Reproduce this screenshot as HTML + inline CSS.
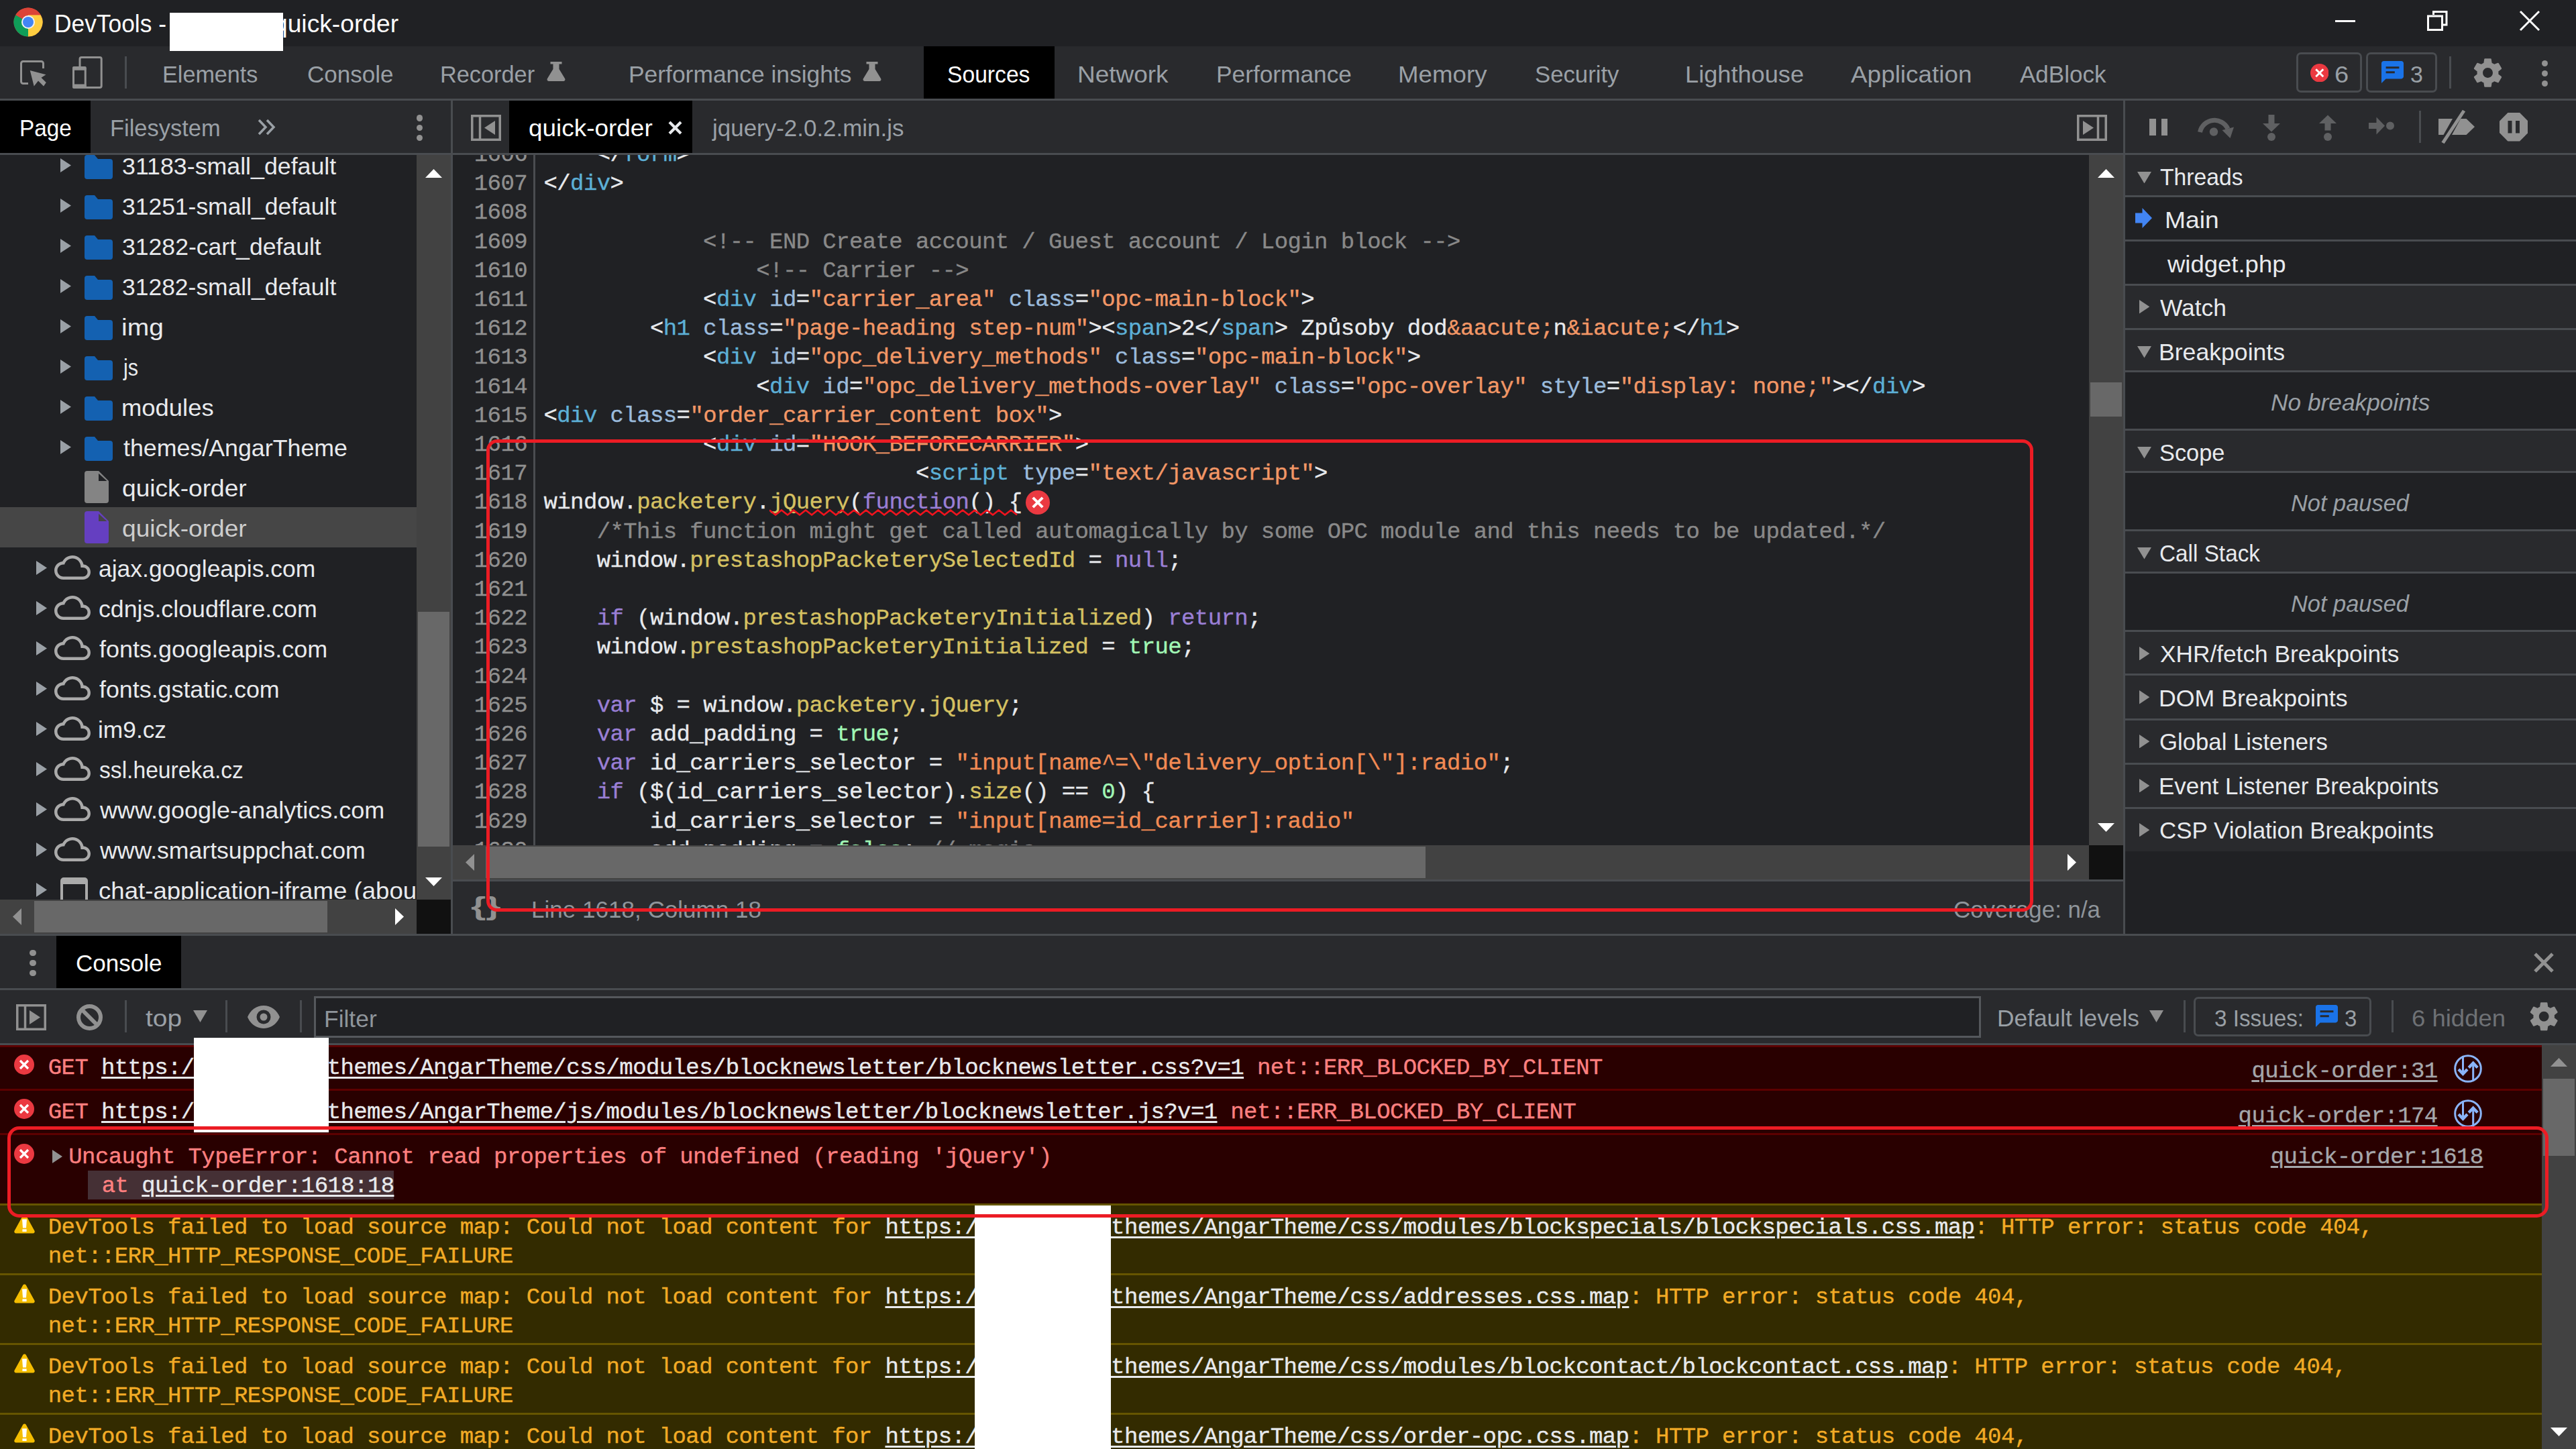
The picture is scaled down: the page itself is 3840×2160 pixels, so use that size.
<!DOCTYPE html>
<html><head><meta charset="utf-8"><title>DevTools - quick-order</title>
<style>
*{margin:0;padding:0;box-sizing:border-box}
html,body{width:3840px;height:2160px;overflow:hidden;background:#202124}
body{position:relative;font-family:"Liberation Sans",sans-serif}
#r{position:absolute;left:0;top:0;width:3840px;height:2160px;overflow:hidden}
#r div,#r svg{position:absolute}
.s{font-family:"Liberation Sans",sans-serif;white-space:pre;transform-origin:0 0}
.m{font-family:"Liberation Mono",monospace;white-space:pre;font-size:34px;line-height:43px;letter-spacing:-0.6px;color:#e8eaed;-webkit-text-stroke:0.35px}
.m span,.m u{position:static}
.clip{overflow:hidden}
u{text-decoration:underline;text-decoration-thickness:2.6px;text-underline-offset:3.5px}
</style></head>
<body><div id="r">
<div style="left:0px;top:0px;width:3840px;height:69px;background:#202124;"></div>
<div style="left:0px;top:69px;width:3840px;height:78px;background:#292a2d;"></div>
<div style="left:0px;top:147px;width:3840px;height:3px;background:#494c50;"></div>
<div style="left:0px;top:150px;width:3840px;height:78px;background:#292a2d;"></div>
<div style="left:0px;top:228px;width:3840px;height:3px;background:#494c50;"></div>
<svg style="left:20px;top:11px;" width="44" height="44" viewBox="0 0 44 44"><circle cx="22" cy="22" r="21.5" fill="#db4437"/>
<path d="M22 22 L3.4 11.2 A21.5 21.5 0 0 0 22 43.5 L31.3 27.4 Z" fill="#0f9d58"/>
<path d="M22 22 L22 43.5 A21.5 21.5 0 0 0 40.6 11.2 L22 11.2 Z" fill="#ffcd40"/>
<path d="M22 22 L3.4 11.2 A21.5 21.5 0 0 1 40.6 11.2 L22 11.2 Z" fill="#db4437"/>
<circle cx="22" cy="22" r="10" fill="#f1f1f1"/><circle cx="22" cy="22" r="8" fill="#4285f4"/></svg>
<div id="t0" class="s" style="left:80.54px;top:17.8px;font-size:36px;line-height:36px;color:#fff;transform:scaleX(0.9817);">DevTools -</div>
<div id="t1" class="s" style="left:408.47px;top:17.8px;font-size:36px;line-height:36px;color:#fff;transform:scaleX(1.0330);">quick-order</div>
<div style="left:253px;top:19px;width:169px;height:57px;background:#fff;"></div>
<div style="left:3481px;top:30px;width:30px;height:3px;background:#fff;"></div>
<svg style="left:3616px;top:14px;" width="34" height="34" viewBox="0 0 34 34"><path d="M11.5 8 V3.5 H31 V23 H26" fill="none" stroke="#fff" stroke-width="3"/><rect x="3.5" y="10" width="21" height="20.5" fill="none" stroke="#fff" stroke-width="3"/></svg>
<svg style="left:3754px;top:14px;" width="34" height="34" viewBox="0 0 34 34"><path d="M3 3 L31 31 M31 3 L3 31" stroke="#fff" stroke-width="3" fill="none"/></svg>
<svg style="left:28px;top:88px;" width="44" height="44" viewBox="0 0 44 44"><path d="M36.5 14 V6.5 a3 3 0 0 0 -3 -3 H6.5 a3 3 0 0 0 -3 3 V33.5 a3 3 0 0 0 3 3 H14" fill="none" stroke="#919191" stroke-width="3"/><path d="M16.75 17 L40.5 23.3 L33.5 27.8 L40.8 35 L37 40.5 L29 32.5 L22.7 40.5 Z" fill="#919191"/></svg>
<svg style="left:106px;top:82px;" width="50" height="52" viewBox="0 0 50 52"><rect x="13" y="3.5" width="32.2" height="45" rx="2.5" fill="none" stroke="#919191" stroke-width="3"/><rect x="3.5" y="18.5" width="17.75" height="30" rx="2.5" fill="#292a2d" stroke="#919191" stroke-width="3"/><rect x="2" y="17" width="20.75" height="5.75" rx="2" fill="#919191"/><rect x="2" y="43.6" width="20.75" height="6.4" rx="2" fill="#919191"/></svg>
<div style="left:186px;top:84px;width:3px;height:48px;background:#494c50;"></div>
<div id="t2" class="s" style="left:242.05px;top:92.9px;font-size:35px;line-height:35px;color:#9aa0a6;transform:scaleX(0.9763);">Elements</div>
<div id="t3" class="s" style="left:458.0px;top:92.9px;font-size:35px;line-height:35px;color:#9aa0a6;transform:scaleX(1.0004);">Console</div>
<div id="t4" class="s" style="left:656.04px;top:92.9px;font-size:35px;line-height:35px;color:#9aa0a6;transform:scaleX(0.9804);">Recorder</div>
<div id="t5" class="s" style="left:936.98px;top:92.9px;font-size:35px;line-height:35px;color:#9aa0a6;transform:scaleX(1.0115);">Performance insights</div>
<div id="t6" class="s" style="left:1605.89px;top:92.9px;font-size:35px;line-height:35px;color:#9aa0a6;transform:scaleX(1.0563);">Network</div>
<div id="t7" class="s" style="left:1813.48px;top:92.9px;font-size:35px;line-height:35px;color:#9aa0a6;transform:scaleX(1.0081);">Performance</div>
<div id="t8" class="s" style="left:2083.9px;top:92.9px;font-size:35px;line-height:35px;color:#9aa0a6;transform:scaleX(1.0489);">Memory</div>
<div id="t9" class="s" style="left:2288.01px;top:92.9px;font-size:35px;line-height:35px;color:#9aa0a6;transform:scaleX(0.9926);">Security</div>
<div id="t10" class="s" style="left:2511.93px;top:92.9px;font-size:35px;line-height:35px;color:#9aa0a6;transform:scaleX(1.0340);">Lighthouse</div>
<div id="t11" class="s" style="left:2759.0px;top:92.9px;font-size:35px;line-height:35px;color:#9aa0a6;transform:scaleX(1.0544);">Application</div>
<div id="t12" class="s" style="left:3011.0px;top:92.9px;font-size:35px;line-height:35px;color:#9aa0a6;transform:scaleX(1.0008);">AdBlock</div>
<div style="left:1377px;top:69px;width:195px;height:78px;background:#000;"></div>
<div id="t13" class="s" style="left:1411.54px;top:92.9px;font-size:35px;line-height:35px;color:#fff;transform:scaleX(0.9614);">Sources</div>
<svg style="left:814.5px;top:92px;" width="28" height="29" viewBox="0 0 28 29"><path d="M5.5 0 H22.5 V3.5 H18.5 V11 L27 25 a2.6 2.6 0 0 1 -2.2 4 H3.2 a2.6 2.6 0 0 1 -2.2 -4 L9.5 11 V3.5 H5.5 Z" fill="#919191"/></svg>
<svg style="left:1286px;top:92px;" width="28" height="29" viewBox="0 0 28 29"><path d="M5.5 0 H22.5 V3.5 H18.5 V11 L27 25 a2.6 2.6 0 0 1 -2.2 4 H3.2 a2.6 2.6 0 0 1 -2.2 -4 L9.5 11 V3.5 H5.5 Z" fill="#919191"/></svg>
<div style="left:3423px;top:78px;width:98px;height:60px;border:3px solid #494c50;border-radius:7px"></div>
<div style="left:3527px;top:78px;width:106px;height:60px;border:3px solid #494c50;border-radius:7px"></div>
<svg style="left:3443.75px;top:94.75px;" width="27.5" height="27.5" viewBox="0 0 27.5 27.5"><circle cx="13.75" cy="13.75" r="13.75" fill="#eb3941"/><path d="M8.25 8.25 L19.25 19.25 M19.25 8.25 L8.25 19.25" stroke="#fff" stroke-width="3.0" fill="none"/></svg>
<div id="t14" class="s" style="left:3479.91px;top:92.9px;font-size:35px;line-height:35px;color:#9aa0a6;transform:scaleX(1.0882);">6</div>
<svg style="left:3549.5px;top:91px;" width="33" height="33" viewBox="0 0 20 20"><path d="M18 0H2C.9 0 0 .9 0 2v18l4-4h14c1.1 0 2-.9 2-2V2c0-1.1-.9-2-2-2z" fill="#1a73e8"/><path d="M4 5h12v1.8H4zM4 9.2h8v1.8H4z" fill="#292a2d"/></svg>
<div id="t15" class="s" style="left:3593.03px;top:92.9px;font-size:35px;line-height:35px;color:#9aa0a6;transform:scaleX(0.9706);">3</div>
<div style="left:3651px;top:84px;width:3px;height:48px;background:#494c50;"></div>
<svg style="left:3682.5px;top:82.5px;" width="51.0" height="51.0" viewBox="0 0 24 24"><path d="M19.43 12.98c.04-.32.07-.64.07-.98s-.03-.66-.07-.98l2.11-1.65c.19-.15.24-.42.12-.64l-2-3.46c-.12-.22-.39-.3-.61-.22l-2.49 1c-.52-.4-1.08-.73-1.69-.98l-.38-2.65C14.46 2.18 14.25 2 14 2h-4c-.25 0-.46.18-.49.42l-.38 2.65c-.61.25-1.17.59-1.69.98l-2.49-1c-.23-.09-.49 0-.61.22l-2 3.46c-.13.22-.07.49.12.64l2.11 1.65c-.04.32-.07.65-.07.98s.03.66.07.98l-2.11 1.65c-.19.15-.24.42-.12.64l2 3.46c.12.22.39.3.61.22l2.49-1c.52.4 1.08.73 1.69.98l.38 2.65c.03.24.24.42.49.42h4c.25 0 .46-.18.49-.42l.38-2.65c.61-.25 1.17-.59 1.69-.98l2.49 1c.23.09.49 0 .61-.22l2-3.46c.12-.22.07-.49-.12-.64l-2.11-1.65zM12 15.5c-1.93 0-3.5-1.57-3.5-3.5s1.57-3.5 3.5-3.5 3.5 1.57 3.5 3.5-1.57 3.5-3.5 3.5z" fill="#919191"/></svg>
<div style="left:3788.9px;top:89.9px;width:9.2px;height:9.2px;border-radius:50%;background:#919191"></div>
<div style="left:3788.9px;top:104.9px;width:9.2px;height:9.2px;border-radius:50%;background:#919191"></div>
<div style="left:3788.9px;top:119.9px;width:9.2px;height:9.2px;border-radius:50%;background:#919191"></div>
<div style="left:0px;top:150px;width:135px;height:78px;background:#000;"></div>
<div id="t16" class="s" style="left:28.6px;top:172.9px;font-size:35px;line-height:35px;color:#fff;transform:scaleX(0.9518);">Page</div>
<div id="t17" class="s" style="left:163.53px;top:172.9px;font-size:35px;line-height:35px;color:#9aa0a6;transform:scaleX(0.9841);">Filesystem</div>
<svg style="left:384px;top:177px;" width="27" height="25" viewBox="0 0 27 25"><path d="M2 2 L12 12.5 L2 23 M14 2 L24 12.5 L14 23" fill="none" stroke="#9aa0a6" stroke-width="3.5"/></svg>
<div style="left:620.9px;top:171.4px;width:9.2px;height:9.2px;border-radius:50%;background:#919191"></div>
<div style="left:620.9px;top:185.9px;width:9.2px;height:9.2px;border-radius:50%;background:#919191"></div>
<div style="left:620.9px;top:200.9px;width:9.2px;height:9.2px;border-radius:50%;background:#919191"></div>
<div style="left:672px;top:150px;width:3px;height:1242px;background:#494c50;"></div>
<svg style="left:702px;top:171px;" width="45" height="39" viewBox="0 0 45 39"><rect x="1.75" y="1.75" width="41.5" height="35.5" fill="none" stroke="#919191" stroke-width="3.5"/><path d="M13.5 2 V37" stroke="#919191" stroke-width="3.5"/><path d="M36 9 V30 L20 19.5 Z" fill="#919191"/></svg>
<div style="left:759px;top:150px;width:273px;height:78px;background:#000;"></div>
<div id="t18" class="s" style="left:787.95px;top:172.9px;font-size:35px;line-height:35px;color:#fff;transform:scaleX(1.0550);">quick-order</div>
<svg style="left:996px;top:180px;" width="21" height="21" viewBox="0 0 21 21"><path d="M2 2 L19 19 M19 2 L2 19" stroke="#e8eaed" stroke-width="4.2" fill="none"/></svg>
<div id="t19" class="s" style="left:1062.0px;top:172.9px;font-size:35px;line-height:35px;color:#9aa0a6;transform:scaleX(0.9984);">jquery-2.0.2.min.js</div>
<svg style="left:3096px;top:171px;" width="45" height="39" viewBox="0 0 45 39"><rect x="1.75" y="1.75" width="41.5" height="35.5" fill="none" stroke="#919191" stroke-width="3.5"/><path d="M31.5 2 V37" stroke="#919191" stroke-width="3.5"/><path d="M9 9 V30 L25 19.5 Z" fill="#919191"/></svg>
<div style="left:3165px;top:150px;width:3px;height:1242px;background:#494c50;"></div>
<div style="left:3204px;top:177px;width:9.5px;height:24.5px;background:#919191;"></div>
<div style="left:3221.5px;top:177px;width:9.5px;height:24.5px;background:#919191;"></div>
<svg style="left:3274px;top:173px;" width="58" height="34" viewBox="0 0 58 34"><path d="M5.5 24 A22 22 0 0 1 47 19" fill="none" stroke="#5f6062" stroke-width="7"/><path d="M38.5 21 L56 16.5 L50.5 33 Z" fill="#5f6062"/><circle cx="26" cy="23.5" r="6.2" fill="#5f6062"/></svg>
<svg style="left:3371px;top:170px;" width="30" height="41" viewBox="0 0 30 41"><path d="M10.5 1 H19.5 V14 H28 L15 26.5 L2 14 H10.5 Z" fill="#5f6062"/><circle cx="15" cy="34" r="6" fill="#5f6062"/></svg>
<svg style="left:3455px;top:170px;" width="30" height="41" viewBox="0 0 30 41"><path d="M15 1.5 L28 14 H19.5 V24.5 H10.5 V14 H2 Z" fill="#5f6062"/><circle cx="15" cy="34" r="6" fill="#5f6062"/></svg>
<svg style="left:3530px;top:173px;" width="41" height="29" viewBox="0 0 41 29"><path d="M1 10 H12.5 V1.5 L25 14.5 L12.5 27.5 V19 H1 Z" fill="#5f6062"/><circle cx="33" cy="14.5" r="6" fill="#5f6062"/></svg>
<div style="left:3606px;top:165px;width:3px;height:48px;background:#494c50;"></div>
<svg style="left:3633px;top:162px;" width="58" height="54" viewBox="0 0 58 54"><path d="M2 15 H23 L9.5 39 H2 Z" fill="#919191"/><path d="M35 15 H43.5 L56 27 L43.5 39 H22 Z" fill="#919191"/><path d="M40 3 L8.5 51" stroke="#919191" stroke-width="5"/></svg>
<svg style="left:3725.5px;top:168px;" width="42.5" height="42.5" viewBox="0 0 42.5 42.5"><path d="M12.4 0 H30.1 L42.5 12.4 V30.1 L30.1 42.5 H12.4 L0 30.1 V12.4 Z" fill="#919191"/><rect x="12.5" y="12" width="6" height="18.5" fill="#292a2d"/><rect x="24" y="12" width="6" height="18.5" fill="#292a2d"/></svg>
<div class="clip" id="tree" style="left:0;top:231px;width:621px;height:1110px;background:#202124">
<svg style="left:90px;top:4.5px" width="16" height="21" viewBox="0 0 16 21"><path d="M0 0 L16 10.5 L0 21 Z" fill="#9aa0a6"/></svg>
<svg style="left:126px;top:0px" width="42" height="36" viewBox="0 0 42 36"><path d="M0 4 a4 4 0 0 1 4 -4 H15 L20 6 H38 a4 4 0 0 1 4 4 V32 a4 4 0 0 1 -4 4 H4 a4 4 0 0 1 -4 -4 Z" fill="#1461b1"/></svg>
<div id="t20" class="s" style="left:182.48px;top:-0.9px;font-size:35px;line-height:35px;color:#e8eaed;transform:scaleX(1.0212);">31183-small_default</div>
<svg style="left:90px;top:64.5px" width="16" height="21" viewBox="0 0 16 21"><path d="M0 0 L16 10.5 L0 21 Z" fill="#9aa0a6"/></svg>
<svg style="left:126px;top:60px" width="42" height="36" viewBox="0 0 42 36"><path d="M0 4 a4 4 0 0 1 4 -4 H15 L20 6 H38 a4 4 0 0 1 4 4 V32 a4 4 0 0 1 -4 4 H4 a4 4 0 0 1 -4 -4 Z" fill="#1461b1"/></svg>
<div id="t21" class="s" style="left:182.49px;top:59.1px;font-size:35px;line-height:35px;color:#e8eaed;transform:scaleX(1.0128);">31251-small_default</div>
<svg style="left:90px;top:124.5px" width="16" height="21" viewBox="0 0 16 21"><path d="M0 0 L16 10.5 L0 21 Z" fill="#9aa0a6"/></svg>
<svg style="left:126px;top:120px" width="42" height="36" viewBox="0 0 42 36"><path d="M0 4 a4 4 0 0 1 4 -4 H15 L20 6 H38 a4 4 0 0 1 4 4 V32 a4 4 0 0 1 -4 4 H4 a4 4 0 0 1 -4 -4 Z" fill="#1461b1"/></svg>
<div id="t22" class="s" style="left:182.48px;top:119.1px;font-size:35px;line-height:35px;color:#e8eaed;transform:scaleX(1.0166);">31282-cart_default</div>
<svg style="left:90px;top:184.5px" width="16" height="21" viewBox="0 0 16 21"><path d="M0 0 L16 10.5 L0 21 Z" fill="#9aa0a6"/></svg>
<svg style="left:126px;top:180px" width="42" height="36" viewBox="0 0 42 36"><path d="M0 4 a4 4 0 0 1 4 -4 H15 L20 6 H38 a4 4 0 0 1 4 4 V32 a4 4 0 0 1 -4 4 H4 a4 4 0 0 1 -4 -4 Z" fill="#1461b1"/></svg>
<div id="t23" class="s" style="left:182.49px;top:179.1px;font-size:35px;line-height:35px;color:#e8eaed;transform:scaleX(1.0128);">31282-small_default</div>
<svg style="left:90px;top:244.5px" width="16" height="21" viewBox="0 0 16 21"><path d="M0 0 L16 10.5 L0 21 Z" fill="#9aa0a6"/></svg>
<svg style="left:126px;top:240px" width="42" height="36" viewBox="0 0 42 36"><path d="M0 4 a4 4 0 0 1 4 -4 H15 L20 6 H38 a4 4 0 0 1 4 4 V32 a4 4 0 0 1 -4 4 H4 a4 4 0 0 1 -4 -4 Z" fill="#1461b1"/></svg>
<div id="t24" class="s" style="left:181.27px;top:239.1px;font-size:35px;line-height:35px;color:#e8eaed;transform:scaleX(1.1147);">img</div>
<svg style="left:90px;top:304.5px" width="16" height="21" viewBox="0 0 16 21"><path d="M0 0 L16 10.5 L0 21 Z" fill="#9aa0a6"/></svg>
<svg style="left:126px;top:300px" width="42" height="36" viewBox="0 0 42 36"><path d="M0 4 a4 4 0 0 1 4 -4 H15 L20 6 H38 a4 4 0 0 1 4 4 V32 a4 4 0 0 1 -4 4 H4 a4 4 0 0 1 -4 -4 Z" fill="#1461b1"/></svg>
<div id="t25" class="s" style="left:184.37px;top:299.1px;font-size:35px;line-height:35px;color:#e8eaed;transform:scaleX(0.8729);">js</div>
<svg style="left:90px;top:364.5px" width="16" height="21" viewBox="0 0 16 21"><path d="M0 0 L16 10.5 L0 21 Z" fill="#9aa0a6"/></svg>
<svg style="left:126px;top:360px" width="42" height="36" viewBox="0 0 42 36"><path d="M0 4 a4 4 0 0 1 4 -4 H15 L20 6 H38 a4 4 0 0 1 4 4 V32 a4 4 0 0 1 -4 4 H4 a4 4 0 0 1 -4 -4 Z" fill="#1461b1"/></svg>
<div id="t26" class="s" style="left:181.42px;top:359.1px;font-size:35px;line-height:35px;color:#e8eaed;transform:scaleX(1.0401);">modules</div>
<svg style="left:90px;top:424.5px" width="16" height="21" viewBox="0 0 16 21"><path d="M0 0 L16 10.5 L0 21 Z" fill="#9aa0a6"/></svg>
<svg style="left:126px;top:420px" width="42" height="36" viewBox="0 0 42 36"><path d="M0 4 a4 4 0 0 1 4 -4 H15 L20 6 H38 a4 4 0 0 1 4 4 V32 a4 4 0 0 1 -4 4 H4 a4 4 0 0 1 -4 -4 Z" fill="#1461b1"/></svg>
<div id="t27" class="s" style="left:183.5px;top:419.1px;font-size:35px;line-height:35px;color:#e8eaed;transform:scaleX(1.0219);">themes/AngarTheme</div>
<svg style="left:126px;top:471px" width="36" height="48" viewBox="0 0 36 48"><path d="M0 4 a4 4 0 0 1 4 -4 H21 L36 15 V44 a4 4 0 0 1 -4 4 H4 a4 4 0 0 1 -4 -4 Z" fill="#848484"/><path d="M21 3.7 V15 H33.4 Z" fill="#202124"/></svg>
<div id="t28" class="s" style="left:182.44px;top:479.1px;font-size:35px;line-height:35px;color:#e8eaed;transform:scaleX(1.0607);">quick-order</div>
<div style="left:0;top:525px;width:621px;height:60px;background:#464646"></div>
<svg style="left:126px;top:531px" width="36" height="48" viewBox="0 0 36 48"><path d="M0 4 a4 4 0 0 1 4 -4 H21 L36 15 V44 a4 4 0 0 1 -4 4 H4 a4 4 0 0 1 -4 -4 Z" fill="#653fc1"/><path d="M21 3.7 V15 H33.4 Z" fill="#464646"/></svg>
<div id="t29" class="s" style="left:182.44px;top:539.1px;font-size:35px;line-height:35px;color:#cdcdcd;transform:scaleX(1.0607);">quick-order</div>
<svg style="left:54px;top:604.5px" width="16" height="21" viewBox="0 0 16 21"><path d="M0 0 L16 10.5 L0 21 Z" fill="#9aa0a6"/></svg>
<svg style="left:80.8px;top:588px" width="54" height="54" viewBox="0 0 24 24"><path d="M19.35 10.04C18.67 6.59 15.64 4 12 4 9.11 4 6.6 5.64 5.35 8.04 2.34 8.36 0 10.91 0 14c0 3.31 2.69 6 6 6h13c2.76 0 5-2.24 5-5 0-2.64-2.05-4.78-4.65-4.96zM19 18H6c-2.21 0-4-1.79-4-4s1.79-4 4-4h.71C7.37 7.69 9.48 6 12 6c3.04 0 5.5 2.46 5.5 5.5v.5H19c1.66 0 3 1.34 3 3s-1.34 3-3 3z" fill="#aaa"/></svg>
<div id="t30" class="s" style="left:146.99px;top:599.1px;font-size:35px;line-height:35px;color:#e8eaed;transform:scaleX(1.0129);">ajax.googleapis.com</div>
<svg style="left:54px;top:664.5px" width="16" height="21" viewBox="0 0 16 21"><path d="M0 0 L16 10.5 L0 21 Z" fill="#9aa0a6"/></svg>
<svg style="left:80.8px;top:648px" width="54" height="54" viewBox="0 0 24 24"><path d="M19.35 10.04C18.67 6.59 15.64 4 12 4 9.11 4 6.6 5.64 5.35 8.04 2.34 8.36 0 10.91 0 14c0 3.31 2.69 6 6 6h13c2.76 0 5-2.24 5-5 0-2.64-2.05-4.78-4.65-4.96zM19 18H6c-2.21 0-4-1.79-4-4s1.79-4 4-4h.71C7.37 7.69 9.48 6 12 6c3.04 0 5.5 2.46 5.5 5.5v.5H19c1.66 0 3 1.34 3 3s-1.34 3-3 3z" fill="#aaa"/></svg>
<div id="t31" class="s" style="left:146.98px;top:659.1px;font-size:35px;line-height:35px;color:#e8eaed;transform:scaleX(1.0210);">cdnjs.cloudflare.com</div>
<svg style="left:54px;top:724.5px" width="16" height="21" viewBox="0 0 16 21"><path d="M0 0 L16 10.5 L0 21 Z" fill="#9aa0a6"/></svg>
<svg style="left:80.8px;top:708px" width="54" height="54" viewBox="0 0 24 24"><path d="M19.35 10.04C18.67 6.59 15.64 4 12 4 9.11 4 6.6 5.64 5.35 8.04 2.34 8.36 0 10.91 0 14c0 3.31 2.69 6 6 6h13c2.76 0 5-2.24 5-5 0-2.64-2.05-4.78-4.65-4.96zM19 18H6c-2.21 0-4-1.79-4-4s1.79-4 4-4h.71C7.37 7.69 9.48 6 12 6c3.04 0 5.5 2.46 5.5 5.5v.5H19c1.66 0 3 1.34 3 3s-1.34 3-3 3z" fill="#aaa"/></svg>
<div id="t32" class="s" style="left:148.0px;top:719.1px;font-size:35px;line-height:35px;color:#e8eaed;transform:scaleX(1.0286);">fonts.googleapis.com</div>
<svg style="left:54px;top:784.5px" width="16" height="21" viewBox="0 0 16 21"><path d="M0 0 L16 10.5 L0 21 Z" fill="#9aa0a6"/></svg>
<svg style="left:80.8px;top:768px" width="54" height="54" viewBox="0 0 24 24"><path d="M19.35 10.04C18.67 6.59 15.64 4 12 4 9.11 4 6.6 5.64 5.35 8.04 2.34 8.36 0 10.91 0 14c0 3.31 2.69 6 6 6h13c2.76 0 5-2.24 5-5 0-2.64-2.05-4.78-4.65-4.96zM19 18H6c-2.21 0-4-1.79-4-4s1.79-4 4-4h.71C7.37 7.69 9.48 6 12 6c3.04 0 5.5 2.46 5.5 5.5v.5H19c1.66 0 3 1.34 3 3s-1.34 3-3 3z" fill="#aaa"/></svg>
<div id="t33" class="s" style="left:148.0px;top:779.1px;font-size:35px;line-height:35px;color:#e8eaed;transform:scaleX(1.0232);">fonts.gstatic.com</div>
<svg style="left:54px;top:844.5px" width="16" height="21" viewBox="0 0 16 21"><path d="M0 0 L16 10.5 L0 21 Z" fill="#9aa0a6"/></svg>
<svg style="left:80.8px;top:828px" width="54" height="54" viewBox="0 0 24 24"><path d="M19.35 10.04C18.67 6.59 15.64 4 12 4 9.11 4 6.6 5.64 5.35 8.04 2.34 8.36 0 10.91 0 14c0 3.31 2.69 6 6 6h13c2.76 0 5-2.24 5-5 0-2.64-2.05-4.78-4.65-4.96zM19 18H6c-2.21 0-4-1.79-4-4s1.79-4 4-4h.71C7.37 7.69 9.48 6 12 6c3.04 0 5.5 2.46 5.5 5.5v.5H19c1.66 0 3 1.34 3 3s-1.34 3-3 3z" fill="#aaa"/></svg>
<div id="t34" class="s" style="left:145.98px;top:839.1px;font-size:35px;line-height:35px;color:#e8eaed;transform:scaleX(1.0090);">im9.cz</div>
<svg style="left:54px;top:904.5px" width="16" height="21" viewBox="0 0 16 21"><path d="M0 0 L16 10.5 L0 21 Z" fill="#9aa0a6"/></svg>
<svg style="left:80.8px;top:888px" width="54" height="54" viewBox="0 0 24 24"><path d="M19.35 10.04C18.67 6.59 15.64 4 12 4 9.11 4 6.6 5.64 5.35 8.04 2.34 8.36 0 10.91 0 14c0 3.31 2.69 6 6 6h13c2.76 0 5-2.24 5-5 0-2.64-2.05-4.78-4.65-4.96zM19 18H6c-2.21 0-4-1.79-4-4s1.79-4 4-4h.71C7.37 7.69 9.48 6 12 6c3.04 0 5.5 2.46 5.5 5.5v.5H19c1.66 0 3 1.34 3 3s-1.34 3-3 3z" fill="#aaa"/></svg>
<div id="t35" class="s" style="left:148.0px;top:899.1px;font-size:35px;line-height:35px;color:#e8eaed;transform:scaleX(0.9608);">ssl.heureka.cz</div>
<svg style="left:54px;top:964.5px" width="16" height="21" viewBox="0 0 16 21"><path d="M0 0 L16 10.5 L0 21 Z" fill="#9aa0a6"/></svg>
<svg style="left:80.8px;top:948px" width="54" height="54" viewBox="0 0 24 24"><path d="M19.35 10.04C18.67 6.59 15.64 4 12 4 9.11 4 6.6 5.64 5.35 8.04 2.34 8.36 0 10.91 0 14c0 3.31 2.69 6 6 6h13c2.76 0 5-2.24 5-5 0-2.64-2.05-4.78-4.65-4.96zM19 18H6c-2.21 0-4-1.79-4-4s1.79-4 4-4h.71C7.37 7.69 9.48 6 12 6c3.04 0 5.5 2.46 5.5 5.5v.5H19c1.66 0 3 1.34 3 3s-1.34 3-3 3z" fill="#aaa"/></svg>
<div id="t36" class="s" style="left:149.03px;top:959.1px;font-size:35px;line-height:35px;color:#e8eaed;transform:scaleX(1.0286);">www.google-analytics.com</div>
<svg style="left:54px;top:1024.5px" width="16" height="21" viewBox="0 0 16 21"><path d="M0 0 L16 10.5 L0 21 Z" fill="#9aa0a6"/></svg>
<svg style="left:80.8px;top:1008px" width="54" height="54" viewBox="0 0 24 24"><path d="M19.35 10.04C18.67 6.59 15.64 4 12 4 9.11 4 6.6 5.64 5.35 8.04 2.34 8.36 0 10.91 0 14c0 3.31 2.69 6 6 6h13c2.76 0 5-2.24 5-5 0-2.64-2.05-4.78-4.65-4.96zM19 18H6c-2.21 0-4-1.79-4-4s1.79-4 4-4h.71C7.37 7.69 9.48 6 12 6c3.04 0 5.5 2.46 5.5 5.5v.5H19c1.66 0 3 1.34 3 3s-1.34 3-3 3z" fill="#aaa"/></svg>
<div id="t37" class="s" style="left:149.02px;top:1019.1px;font-size:35px;line-height:35px;color:#e8eaed;transform:scaleX(1.0171);">www.smartsuppchat.com</div>
<svg style="left:54px;top:1084.5px" width="16" height="21" viewBox="0 0 16 21"><path d="M0 0 L16 10.5 L0 21 Z" fill="#9aa0a6"/></svg>
<svg style="left:90px;top:1077px" width="41" height="40" viewBox="0 0 41 40"><rect x="2" y="2" width="37" height="36" rx="3" fill="none" stroke="#aaa" stroke-width="4"/><rect x="2" y="2" width="37" height="8" fill="#aaa"/></svg>
<div id="t38" class="s" style="left:146.95px;top:1079.1px;font-size:35px;line-height:35px;color:#e8eaed;transform:scaleX(1.0459);">chat-application-iframe (abou</div>
</div>
<div style="left:621px;top:231px;width:51px;height:1110px;background:#424242;"></div>
<svg style="left:634.0px;top:252.0px;" width="25" height="13" viewBox="0 0 25 13"><polygon points="0 13 12.5 0 25 13" fill="#fff"/></svg>
<svg style="left:634.0px;top:1307.5px;" width="25" height="13" viewBox="0 0 25 13"><polygon points="0 0 25 0 12.5 13" fill="#fff"/></svg>
<div style="left:623px;top:912px;width:47px;height:350px;background:#686868;"></div>
<div style="left:0px;top:1341px;width:621px;height:51px;background:#424242;"></div>
<div style="left:621px;top:1341px;width:51px;height:51px;background:#111;"></div>
<svg style="left:18.5px;top:1354.0px;" width="13" height="25" viewBox="0 0 13 25"><polygon points="13 0 13 25 0 12.5" fill="#919191"/></svg>
<svg style="left:589.0px;top:1354.0px;" width="13" height="25" viewBox="0 0 13 25"><polygon points="0 0 13 12.5 0 25" fill="#fff"/></svg>
<div style="left:51px;top:1343px;width:437px;height:47px;background:#686868;"></div>
<div style="left:0px;top:1392px;width:3840px;height:3px;background:#494c50;"></div>
<div class="clip" id="ed" style="left:675px;top:231px;width:2439px;height:1029px;background:#202124">
<div style="left:120px;top:0;width:3px;height:1029px;background:#4a4c50"></div>
<div class="m" style="left:0;top:-21.0px;width:111px;text-align:right;color:#909090">1606</div>
<div class="m" style="left:214.7px;top:-21.0px">&lt;/<span style="color:#5db0d7">form</span>&gt;</div>
<div class="m" style="left:0;top:22.2px;width:111px;text-align:right;color:#909090">1607</div>
<div class="m" style="left:135.5px;top:22.2px">&lt;/<span style="color:#5db0d7">div</span>&gt;</div>
<div class="m" style="left:0;top:65.4px;width:111px;text-align:right;color:#909090">1608</div>
<div class="m" style="left:0;top:108.6px;width:111px;text-align:right;color:#909090">1609</div>
<div class="m" style="left:373.1px;top:108.6px"><span style="color:#898989">&lt;!-- END Create account / Guest account / Login block --&gt;</span></div>
<div class="m" style="left:0;top:151.8px;width:111px;text-align:right;color:#909090">1610</div>
<div class="m" style="left:452.3px;top:151.8px"><span style="color:#898989">&lt;!-- Carrier --&gt;</span></div>
<div class="m" style="left:0;top:195.0px;width:111px;text-align:right;color:#909090">1611</div>
<div class="m" style="left:373.1px;top:195.0px">&lt;<span style="color:#5db0d7">div</span> <span style="color:#9bbbdc">id</span>=<span style="color:#f29766">"carrier_area"</span> <span style="color:#9bbbdc">class</span>=<span style="color:#f29766">"opc-main-block"</span>&gt;</div>
<div class="m" style="left:0;top:238.2px;width:111px;text-align:right;color:#909090">1612</div>
<div class="m" style="left:293.9px;top:238.2px">&lt;<span style="color:#5db0d7">h1</span> <span style="color:#9bbbdc">class</span>=<span style="color:#f29766">"page-heading step-num"</span>&gt;&lt;<span style="color:#5db0d7">span</span>&gt;2&lt;/<span style="color:#5db0d7">span</span>&gt; Způsoby dod<span style="color:#f29766">&amp;aacute;</span>n<span style="color:#f29766">&amp;iacute;</span>&lt;/<span style="color:#5db0d7">h1</span>&gt;</div>
<div class="m" style="left:0;top:281.4px;width:111px;text-align:right;color:#909090">1613</div>
<div class="m" style="left:373.1px;top:281.4px">&lt;<span style="color:#5db0d7">div</span> <span style="color:#9bbbdc">id</span>=<span style="color:#f29766">"opc_delivery_methods"</span> <span style="color:#9bbbdc">class</span>=<span style="color:#f29766">"opc-main-block"</span>&gt;</div>
<div class="m" style="left:0;top:324.6px;width:111px;text-align:right;color:#909090">1614</div>
<div class="m" style="left:452.3px;top:324.6px">&lt;<span style="color:#5db0d7">div</span> <span style="color:#9bbbdc">id</span>=<span style="color:#f29766">"opc_delivery_methods-overlay"</span> <span style="color:#9bbbdc">class</span>=<span style="color:#f29766">"opc-overlay"</span> <span style="color:#9bbbdc">style</span>=<span style="color:#f29766">"display: none;"</span>&gt;&lt;/<span style="color:#5db0d7">div</span>&gt;</div>
<div class="m" style="left:0;top:367.8px;width:111px;text-align:right;color:#909090">1615</div>
<div class="m" style="left:135.5px;top:367.8px">&lt;<span style="color:#5db0d7">div</span> <span style="color:#9bbbdc">class</span>=<span style="color:#f29766">"order_carrier_content box"</span>&gt;</div>
<div class="m" style="left:0;top:411.0px;width:111px;text-align:right;color:#909090">1616</div>
<div class="m" style="left:373.1px;top:411.0px">&lt;<span style="color:#5db0d7">div</span> <span style="color:#9bbbdc">id</span>=<span style="color:#f29766">"HOOK_BEFORECARRIER"</span>&gt;</div>
<div class="m" style="left:0;top:454.2px;width:111px;text-align:right;color:#909090">1617</div>
<div class="m" style="left:689.9px;top:454.2px">&lt;<span style="color:#5db0d7">script</span> <span style="color:#9bbbdc">type</span>=<span style="color:#f29766">"text/javascript"</span>&gt;</div>
<div class="m" style="left:0;top:497.4px;width:111px;text-align:right;color:#909090">1618</div>
<div class="m" style="left:135.5px;top:497.4px">window.<span style="color:#d5c162">packetery</span>.<span style="color:#d5c162">jQuery</span>(<span style="color:#9a7fd5">function</span>() {</div>
<div class="m" style="left:0;top:540.6px;width:111px;text-align:right;color:#909090">1619</div>
<div class="m" style="left:214.7px;top:540.6px"><span style="color:#898989">/*This function might get called automagically by some OPC module and this needs to be updated.*/</span></div>
<div class="m" style="left:0;top:583.8px;width:111px;text-align:right;color:#909090">1620</div>
<div class="m" style="left:214.7px;top:583.8px">window.<span style="color:#d5c162">prestashopPacketerySelectedId</span> = <span style="color:#9a7fd5">null</span>;</div>
<div class="m" style="left:0;top:627.0px;width:111px;text-align:right;color:#909090">1621</div>
<div class="m" style="left:0;top:670.2px;width:111px;text-align:right;color:#909090">1622</div>
<div class="m" style="left:214.7px;top:670.2px"><span style="color:#9a7fd5">if</span> (window.<span style="color:#d5c162">prestashopPacketeryInitialized</span>) <span style="color:#9a7fd5">return</span>;</div>
<div class="m" style="left:0;top:713.4px;width:111px;text-align:right;color:#909090">1623</div>
<div class="m" style="left:214.7px;top:713.4px">window.<span style="color:#d5c162">prestashopPacketeryInitialized</span> = <span style="color:#a1f7b5">true</span>;</div>
<div class="m" style="left:0;top:756.6px;width:111px;text-align:right;color:#909090">1624</div>
<div class="m" style="left:0;top:799.8px;width:111px;text-align:right;color:#909090">1625</div>
<div class="m" style="left:214.7px;top:799.8px"><span style="color:#9a7fd5">var</span> $ = window.<span style="color:#d5c162">packetery</span>.<span style="color:#d5c162">jQuery</span>;</div>
<div class="m" style="left:0;top:843.0px;width:111px;text-align:right;color:#909090">1626</div>
<div class="m" style="left:214.7px;top:843.0px"><span style="color:#9a7fd5">var</span> add_padding = <span style="color:#a1f7b5">true</span>;</div>
<div class="m" style="left:0;top:886.2px;width:111px;text-align:right;color:#909090">1627</div>
<div class="m" style="left:214.7px;top:886.2px"><span style="color:#9a7fd5">var</span> id_carriers_selector = <span style="color:#f28b54">"input[name^=\"delivery_option[\"]:radio"</span>;</div>
<div class="m" style="left:0;top:929.4px;width:111px;text-align:right;color:#909090">1628</div>
<div class="m" style="left:214.7px;top:929.4px"><span style="color:#9a7fd5">if</span> ($(id_carriers_selector).<span style="color:#d5c162">size</span>() == <span style="color:#a1f7b5">0</span>) {</div>
<div class="m" style="left:0;top:972.6px;width:111px;text-align:right;color:#909090">1629</div>
<div class="m" style="left:293.9px;top:972.6px">id_carriers_selector = <span style="color:#f28b54">"input[name=id_carrier]:radio"</span></div>
<div class="m" style="left:0;top:1015.8px;width:111px;text-align:right;color:#909090">1630</div>
<div class="m" style="left:293.9px;top:1015.8px">add_padding = <span style="color:#a1f7b5">false</span>; <span style="color:#898989">// magic</span></div>
<svg style="left:472.1px;top:527.5px" width="376" height="10" viewBox="0 0 376 10"><polyline points="0.0 1.5 9.0 8.5 18.0 1.5 27.0 8.5 36.0 1.5 45.0 8.5 54.0 1.5 63.0 8.5 72.0 1.5 81.0 8.5 90.0 1.5 99.0 8.5 108.0 1.5 117.0 8.5 126.0 1.5 135.0 8.5 144.0 1.5 153.0 8.5 162.0 1.5 171.0 8.5 180.0 1.5 189.0 8.5 198.0 1.5 207.0 8.5 216.0 1.5 225.0 8.5 234.0 1.5 243.0 8.5 252.0 1.5 261.0 8.5 270.0 1.5 279.0 8.5 288.0 1.5 297.0 8.5 306.0 1.5 315.0 8.5 324.0 1.5 333.0 8.5 342.0 1.5 351.0 8.5 360.0 1.5 369.0 8.5" fill="none" stroke="#f0141e" stroke-width="2.6"/></svg>
</div>
<svg style="left:1528.8px;top:731.2px;" width="36" height="36" viewBox="0 0 36 36"><circle cx="18.0" cy="18.0" r="18.0" fill="#eb3941"/><path d="M10.8 10.8 L25.2 25.2 M25.2 10.8 L10.8 25.2" stroke="#fff" stroke-width="4.0" fill="none"/></svg>
<div style="left:3114px;top:231px;width:51px;height:1029px;background:#424242;"></div>
<svg style="left:3127.0px;top:251.5px;" width="25" height="13" viewBox="0 0 25 13"><polygon points="0 13 12.5 0 25 13" fill="#fff"/></svg>
<svg style="left:3127.0px;top:1227.0px;" width="25" height="13" viewBox="0 0 25 13"><polygon points="0 0 25 0 12.5 13" fill="#fff"/></svg>
<div style="left:3116px;top:570px;width:47px;height:51px;background:#686868;"></div>
<div style="left:675px;top:1260px;width:2439px;height:51px;background:#424242;"></div>
<div style="left:3114px;top:1260px;width:51px;height:51px;background:#111;"></div>
<svg style="left:694.0px;top:1273.0px;" width="13" height="25" viewBox="0 0 13 25"><polygon points="13 0 13 25 0 12.5" fill="#919191"/></svg>
<svg style="left:3082.0px;top:1273.0px;" width="13" height="25" viewBox="0 0 13 25"><polygon points="0 0 13 12.5 0 25" fill="#fff"/></svg>
<div style="left:724px;top:1262px;width:1401px;height:47px;background:#686868;"></div>
<div style="left:675px;top:1311px;width:2490px;height:3px;background:#494c50;"></div>
<div style="left:675px;top:1314px;width:2490px;height:78px;background:#292a2d;"></div>
<div id="t39" class="s" style="left:702.0px;top:1332.3px;font-size:38px;line-height:38px;color:#919191;transform:scaleX(1.5107);font-weight:bold;">{}</div>
<div id="t40" class="s" style="left:791.5px;top:1337.9px;font-size:35px;line-height:35px;color:#8f959b;transform:scaleX(1.0015);">Line 1618, Column 18</div>
<div id="t41" class="s" style="left:2911.5px;top:1337.9px;font-size:35px;line-height:35px;color:#8f959b;transform:scaleX(0.9959);">Coverage: n/a</div>
<div style="left:3168px;top:231px;width:672px;height:1161px;background:#202124;"></div>
<div style="left:3168px;top:231px;width:672px;height:60px;background:#292a2d;"></div>
<div style="left:3168px;top:291px;width:672px;height:3px;background:#494c50;"></div>
<svg style="left:3186.0px;top:255.5px;" width="21" height="17.5" viewBox="0 0 21 17.5"><polygon points="0 0 21 0 10.5 17.5" fill="#919191"/></svg>
<div id="t42" class="s" style="left:3220.0px;top:246.1px;font-size:35px;line-height:35px;color:#e8eaed;transform:scaleX(0.9617);">Threads</div>
<div style="left:3168px;top:357px;width:672px;height:3px;background:#494c50;"></div>
<div id="t43" class="s" style="left:3227.37px;top:310.4px;font-size:35px;line-height:35px;color:#e8eaed;transform:scaleX(1.0636);">Main</div>
<svg style="left:3183px;top:310px;" width="25" height="30" viewBox="0 0 25 30"><path d="M0 7.5 H10.5 V0 L25 15 L10.5 30 V22.5 H0 Z" fill="#4285f4"/></svg>
<div style="left:3168px;top:423px;width:672px;height:3px;background:#494c50;"></div>
<div id="t44" class="s" style="left:3230.54px;top:375.9px;font-size:35px;line-height:35px;color:#e8eaed;transform:scaleX(1.0425);">widget.php</div>
<div style="left:3168px;top:426px;width:672px;height:63px;background:#292a2d;"></div>
<div style="left:3168px;top:489px;width:672px;height:3px;background:#494c50;"></div>
<svg style="left:3188.75px;top:447.25px;" width="15.5" height="20.5" viewBox="0 0 15.5 20.5"><polygon points="0 0 15.5 10.25 0 20.5" fill="#919191"/></svg>
<div id="t45" class="s" style="left:3220.0px;top:440.9px;font-size:35px;line-height:35px;color:#e8eaed;transform:scaleX(1.0111);">Watch</div>
<div style="left:3168px;top:492px;width:672px;height:60px;background:#292a2d;"></div>
<div style="left:3168px;top:552px;width:672px;height:3px;background:#494c50;"></div>
<svg style="left:3186.0px;top:516.0px;" width="21" height="17.5" viewBox="0 0 21 17.5"><polygon points="0 0 21 0 10.5 17.5" fill="#919191"/></svg>
<div id="t46" class="s" style="left:3217.97px;top:506.6px;font-size:35px;line-height:35px;color:#e8eaed;transform:scaleX(1.0174);">Breakpoints</div>
<div style="left:3168px;top:639px;width:672px;height:3px;background:#494c50;"></div>
<div id="t47" class="s" style="left:3384.99px;top:582.1px;font-size:35px;line-height:35px;color:#9aa0a6;font-style:italic;transform:scaleX(1.0079);">No breakpoints</div>
<div style="left:3168px;top:642px;width:672px;height:60px;background:#292a2d;"></div>
<div style="left:3168px;top:702px;width:672px;height:3px;background:#494c50;"></div>
<svg style="left:3186.0px;top:666.0px;" width="21" height="17.5" viewBox="0 0 21 17.5"><polygon points="0 0 21 0 10.5 17.5" fill="#919191"/></svg>
<div id="t48" class="s" style="left:3219.02px;top:656.6px;font-size:35px;line-height:35px;color:#e8eaed;transform:scaleX(0.9817);">Scope</div>
<div style="left:3168px;top:789px;width:672px;height:3px;background:#494c50;"></div>
<div id="t49" class="s" style="left:3415.02px;top:732.1px;font-size:35px;line-height:35px;color:#9aa0a6;font-style:italic;transform:scaleX(0.9830);">Not paused</div>
<div style="left:3168px;top:792px;width:672px;height:60px;background:#292a2d;"></div>
<div style="left:3168px;top:852px;width:672px;height:3px;background:#494c50;"></div>
<svg style="left:3186.0px;top:816.0px;" width="21" height="17.5" viewBox="0 0 21 17.5"><polygon points="0 0 21 0 10.5 17.5" fill="#919191"/></svg>
<div id="t50" class="s" style="left:3219.05px;top:806.6px;font-size:35px;line-height:35px;color:#e8eaed;transform:scaleX(0.9519);">Call Stack</div>
<div style="left:3168px;top:939px;width:672px;height:3px;background:#494c50;"></div>
<div id="t51" class="s" style="left:3415.02px;top:882.1px;font-size:35px;line-height:35px;color:#9aa0a6;font-style:italic;transform:scaleX(0.9830);">Not paused</div>
<div style="left:3168px;top:942px;width:672px;height:62px;background:#292a2d;"></div>
<div style="left:3168px;top:1004px;width:672px;height:3px;background:#494c50;"></div>
<svg style="left:3188.75px;top:963.75px;" width="15.5" height="20.5" viewBox="0 0 15.5 20.5"><polygon points="0 0 15.5 10.25 0 20.5" fill="#919191"/></svg>
<div id="t52" class="s" style="left:3220.0px;top:957.4px;font-size:35px;line-height:35px;color:#e8eaed;transform:scaleX(1.0069);">XHR/fetch Breakpoints</div>
<div style="left:3168px;top:1007px;width:672px;height:63.5px;background:#292a2d;"></div>
<div style="left:3168px;top:1070.5px;width:672px;height:3px;background:#494c50;"></div>
<svg style="left:3188.75px;top:1029.25px;" width="15.5" height="20.5" viewBox="0 0 15.5 20.5"><polygon points="0 0 15.5 10.25 0 20.5" fill="#919191"/></svg>
<div id="t53" class="s" style="left:3217.96px;top:1022.9px;font-size:35px;line-height:35px;color:#e8eaed;transform:scaleX(1.0193);">DOM Breakpoints</div>
<div style="left:3168px;top:1073.5px;width:672px;height:63.5px;background:#292a2d;"></div>
<div style="left:3168px;top:1137px;width:672px;height:3px;background:#494c50;"></div>
<svg style="left:3188.75px;top:1094.75px;" width="15.5" height="20.5" viewBox="0 0 15.5 20.5"><polygon points="0 0 15.5 10.25 0 20.5" fill="#919191"/></svg>
<div id="t54" class="s" style="left:3219.01px;top:1088.4px;font-size:35px;line-height:35px;color:#e8eaed;transform:scaleX(0.9924);">Global Listeners</div>
<div style="left:3168px;top:1140px;width:672px;height:62.5px;background:#292a2d;"></div>
<div style="left:3168px;top:1202.5px;width:672px;height:3px;background:#494c50;"></div>
<svg style="left:3188.75px;top:1160.5px;" width="15.5" height="20.5" viewBox="0 0 15.5 20.5"><polygon points="0 0 15.5 10.25 0 20.5" fill="#919191"/></svg>
<div id="t55" class="s" style="left:3218.0px;top:1154.1px;font-size:35px;line-height:35px;color:#e8eaed;transform:scaleX(0.9981);">Event Listener Breakpoints</div>
<div style="left:3168px;top:1205.5px;width:672px;height:63.0px;background:#292a2d;"></div>
<svg style="left:3188.75px;top:1226.75px;" width="15.5" height="20.5" viewBox="0 0 15.5 20.5"><polygon points="0 0 15.5 10.25 0 20.5" fill="#919191"/></svg>
<div id="t56" class="s" style="left:3219.0px;top:1220.4px;font-size:35px;line-height:35px;color:#e8eaed;transform:scaleX(0.9991);">CSP Violation Breakpoints</div>
<div style="left:0px;top:1395px;width:3840px;height:78px;background:#292a2d;"></div>
<div style="left:0px;top:1473px;width:3840px;height:3px;background:#494c50;"></div>
<div style="left:0px;top:1476px;width:3840px;height:79px;background:#292a2d;"></div>
<div style="left:0px;top:1555px;width:3840px;height:3px;background:#494c50;"></div>
<div style="left:44.4px;top:1415.9px;width:9.2px;height:9.2px;border-radius:50%;background:#919191"></div>
<div style="left:44.4px;top:1430.9px;width:9.2px;height:9.2px;border-radius:50%;background:#919191"></div>
<div style="left:44.4px;top:1445.9px;width:9.2px;height:9.2px;border-radius:50%;background:#919191"></div>
<div style="left:84px;top:1395px;width:186px;height:78px;background:#000;"></div>
<div id="t57" class="s" style="left:113.0px;top:1418.4px;font-size:35px;line-height:35px;color:#fff;transform:scaleX(1.0004);">Console</div>
<svg style="left:3777px;top:1419.5px;" width="30" height="30" viewBox="0 0 30 30"><path d="M2 2 L28 28 M28 2 L2 28" stroke="#919191" stroke-width="5" fill="none"/></svg>
<svg style="left:24px;top:1497px;" width="45" height="39" viewBox="0 0 45 39"><rect x="1.75" y="1.75" width="41.5" height="35.5" fill="none" stroke="#919191" stroke-width="3.5"/><path d="M13.5 2 V37" stroke="#919191" stroke-width="3.5"/><path d="M20 9 V30 L36 19.5 Z" fill="#919191"/></svg>
<svg style="left:114px;top:1497px;" width="39" height="39" viewBox="0 0 39 39"><circle cx="19.5" cy="19.5" r="16.5" fill="none" stroke="#919191" stroke-width="6"/><path d="M8 8 L31 31" stroke="#919191" stroke-width="6"/></svg>
<div style="left:186px;top:1491px;width:3px;height:48px;background:#494c50;"></div>
<div id="t58" class="s" style="left:217.0px;top:1499.9px;font-size:35px;line-height:35px;color:#9aa0a6;transform:scaleX(1.1125);">top</div>
<svg style="left:288.0px;top:1506.0px;" width="21" height="18" viewBox="0 0 21 18"><polygon points="0 0 21 0 10.5 18" fill="#919191"/></svg>
<div style="left:336px;top:1491px;width:3px;height:48px;background:#494c50;"></div>
<svg style="left:369px;top:1499px;" width="48" height="34" viewBox="0 0 48 34"><path d="M24 0 C13 0 4 7 0 17 C4 27 13 34 24 34 C35 34 44 27 48 17 C44 7 35 0 24 0 Z" fill="#919191"/><circle cx="24" cy="17" r="10.5" fill="#292a2d"/><circle cx="24" cy="17" r="5.5" fill="#919191"/></svg>
<div style="left:447px;top:1491px;width:3px;height:48px;background:#494c50;"></div>
<div style="left:468px;top:1484.5px;width:2485px;height:62px;background:#202124;border:3px solid #55585c"></div>
<div id="t59" class="s" style="left:482.98px;top:1501.4px;font-size:35px;line-height:35px;color:#8f959b;transform:scaleX(1.0116);">Filter</div>
<div id="t60" class="s" style="left:2976.98px;top:1500.4px;font-size:35px;line-height:35px;color:#9aa0a6;transform:scaleX(1.0091);">Default levels</div>
<svg style="left:3204.0px;top:1506.0px;" width="21" height="18" viewBox="0 0 21 18"><polygon points="0 0 21 0 10.5 18" fill="#919191"/></svg>
<div style="left:3255px;top:1491px;width:3px;height:48px;background:#494c50;"></div>
<div style="left:3270px;top:1485.5px;width:265px;height:59px;border:3px solid #494c50;border-radius:7px"></div>
<div id="t61" class="s" style="left:3300.55px;top:1499.9px;font-size:35px;line-height:35px;color:#9aa0a6;transform:scaleX(0.9498);">3 Issues:</div>
<svg style="left:3451.5px;top:1498px;" width="33" height="33" viewBox="0 0 20 20"><path d="M18 0H2C.9 0 0 .9 0 2v18l4-4h14c1.1 0 2-.9 2-2V2c0-1.1-.9-2-2-2z" fill="#1a73e8"/><path d="M4 5h12v1.8H4zM4 9.2h8v1.8H4z" fill="#292a2d"/></svg>
<div id="t62" class="s" style="left:3495.06px;top:1499.9px;font-size:35px;line-height:35px;color:#9aa0a6;transform:scaleX(0.9412);">3</div>
<div style="left:3565px;top:1491px;width:3px;height:48px;background:#494c50;"></div>
<div id="t63" class="s" style="left:3594.96px;top:1499.9px;font-size:35px;line-height:35px;color:#6e7175;transform:scaleX(1.0430);">6 hidden</div>
<svg style="left:3766.8px;top:1489.5px;" width="50.400000000000006" height="50.400000000000006" viewBox="0 0 24 24"><path d="M19.43 12.98c.04-.32.07-.64.07-.98s-.03-.66-.07-.98l2.11-1.65c.19-.15.24-.42.12-.64l-2-3.46c-.12-.22-.39-.3-.61-.22l-2.49 1c-.52-.4-1.08-.73-1.69-.98l-.38-2.65C14.46 2.18 14.25 2 14 2h-4c-.25 0-.46.18-.49.42l-.38 2.65c-.61.25-1.17.59-1.69.98l-2.49-1c-.23-.09-.49 0-.61.22l-2 3.46c-.13.22-.07.49.12.64l2.11 1.65c-.04.32-.07.65-.07.98s.03.66.07.98l-2.11 1.65c-.19.15-.24.42-.12.64l2 3.46c.12.22.39.3.61.22l2.49-1c.52.4 1.08.73 1.69.98l.38 2.65c.03.24.24.42.49.42h4c.25 0 .46-.18.49-.42l.38-2.65c.61-.25 1.17-.59 1.69-.98l2.49 1c.23.09.49 0 .61-.22l2-3.46c.12-.22.07-.49-.12-.64l-2.11-1.65zM12 15.5c-1.93 0-3.5-1.57-3.5-3.5s1.57-3.5 3.5-3.5 3.5 1.57 3.5 3.5-1.57 3.5-3.5 3.5z" fill="#919191"/></svg>
<div style="left:0px;top:1558px;width:3789px;height:236px;background:#290000;"></div>
<div style="left:0px;top:1558px;width:3789px;height:3px;background:#5c0000;"></div>
<div style="left:0px;top:1623px;width:3789px;height:3px;background:#5c0000;"></div>
<div style="left:0px;top:1689px;width:3789px;height:3px;background:#5c0000;"></div>
<div style="left:0px;top:1794px;width:3789px;height:366px;background:#332b00;"></div>
<div style="left:0px;top:1794px;width:3789px;height:3px;background:#665500;"></div>
<div style="left:0px;top:1898px;width:3789px;height:3px;background:#665500;"></div>
<div style="left:0px;top:2002px;width:3789px;height:3px;background:#665500;"></div>
<div style="left:0px;top:2106px;width:3789px;height:3px;background:#665500;"></div>
<svg style="left:21.0px;top:1572.0px;" width="30" height="30" viewBox="0 0 30 30"><circle cx="15.0" cy="15.0" r="15.0" fill="#eb3941"/><path d="M9.0 9.0 L21.0 21.0 M21.0 9.0 L9.0 21.0" stroke="#fff" stroke-width="3.3" fill="none"/></svg>
<div class="m" style="left:71.8px;top:1571.4px;color:#ff8080;">GET <u style="color:#e8eaed">https:/          themes/AngarTheme/css/modules/blocknewsletter/blocknewsletter.css?v=1</u> net::ERR_BLOCKED_BY_CLIENT</div>
<svg style="left:21.0px;top:1638.0px;" width="30" height="30" viewBox="0 0 30 30"><circle cx="15.0" cy="15.0" r="15.0" fill="#eb3941"/><path d="M9.0 9.0 L21.0 21.0 M21.0 9.0 L9.0 21.0" stroke="#fff" stroke-width="3.3" fill="none"/></svg>
<div class="m" style="left:71.8px;top:1637.4px;color:#ff8080;">GET <u style="color:#e8eaed">https:/          themes/AngarTheme/js/modules/blocknewsletter/blocknewsletter.js?v=1</u> net::ERR_BLOCKED_BY_CLIENT</div>
<svg style="left:21.0px;top:1704.5px;" width="30" height="30" viewBox="0 0 30 30"><circle cx="15.0" cy="15.0" r="15.0" fill="#eb3941"/><path d="M9.0 9.0 L21.0 21.0 M21.0 9.0 L9.0 21.0" stroke="#fff" stroke-width="3.3" fill="none"/></svg>
<svg style="left:78.0px;top:1713.7px;" width="15" height="20" viewBox="0 0 15 20"><polygon points="0 0 15 10.0 0 20" fill="#919191"/></svg>
<div class="m" style="left:102.3px;top:1704.4px;color:#ff8080;">Uncaught TypeError: Cannot read properties of undefined (reading 'jQuery')</div>
<div style="left:131px;top:1745px;width:456px;height:42.5px;background:#453035;"></div>
<div class="m" style="left:151.8px;top:1747.4px;color:#ff8080;">at <u style="color:#e8eaed">quick-order:1618:18</u></div>
<div class="m" style="left:3356.4px;top:1576.4px;color:#a5a7ab;"><u style="color:#a5a7ab">quick-order:31</u></div>
<div class="m" style="left:3336.6px;top:1642.9px;color:#a5a7ab;"><u style="color:#a5a7ab">quick-order:174</u></div>
<div class="m" style="left:3384.8px;top:1704.4px;color:#a5a7ab;"><u style="color:#a5a7ab">quick-order:1618</u></div>
<svg style="left:3658px;top:1572px;" width="42" height="42" viewBox="0 0 42 42"><circle cx="21" cy="21" r="19.3" fill="none" stroke="#8ab4f8" stroke-width="3"/><path d="M13.5 2 V28 M28.7 13 V40" fill="none" stroke="#8ab4f8" stroke-width="3"/><path d="M7 22 L13.5 28.8 L20 22 M22.2 19.5 L28.7 12.7 L35.2 19.5" fill="none" stroke="#8ab4f8" stroke-width="4.4"/></svg>
<svg style="left:3658px;top:1638.5px;" width="42" height="42" viewBox="0 0 42 42"><circle cx="21" cy="21" r="19.3" fill="none" stroke="#8ab4f8" stroke-width="3"/><path d="M13.5 2 V28 M28.7 13 V40" fill="none" stroke="#8ab4f8" stroke-width="3"/><path d="M7 22 L13.5 28.8 L20 22 M22.2 19.5 L28.7 12.7 L35.2 19.5" fill="none" stroke="#8ab4f8" stroke-width="4.4"/></svg>
<svg style="left:20.5px;top:1808.5px;" width="31" height="31" viewBox="0 0 31 31"><path d="M15.5 1.5 a2.6 2.6 0 0 1 2.3 1.3 L30.3 25.5 a2.6 2.6 0 0 1 -2.3 4 H3 a2.6 2.6 0 0 1 -2.3 -4 L13.2 2.8 a2.6 2.6 0 0 1 2.3 -1.3 Z" fill="#f4bd00"/><path d="M12 8.5 H19 L18 21.5 H13 Z" fill="#fff"/><rect x="12.4" y="23.4" width="6.2" height="3.6" fill="#fff"/></svg>
<div class="m" style="left:71.8px;top:1808.9px;color:#f2ab26;">DevTools failed to load source map: Could not load content for <u style="color:#e8eaed">https:/          themes/AngarTheme/css/modules/blockspecials/blockspecials.css.map</u>: HTTP error: status code 404,</div>
<div class="m" style="left:71.8px;top:1851.9px;color:#f2ab26;">net::ERR_HTTP_RESPONSE_CODE_FAILURE</div>
<svg style="left:20.5px;top:1912.5px;" width="31" height="31" viewBox="0 0 31 31"><path d="M15.5 1.5 a2.6 2.6 0 0 1 2.3 1.3 L30.3 25.5 a2.6 2.6 0 0 1 -2.3 4 H3 a2.6 2.6 0 0 1 -2.3 -4 L13.2 2.8 a2.6 2.6 0 0 1 2.3 -1.3 Z" fill="#f4bd00"/><path d="M12 8.5 H19 L18 21.5 H13 Z" fill="#fff"/><rect x="12.4" y="23.4" width="6.2" height="3.6" fill="#fff"/></svg>
<div class="m" style="left:71.8px;top:1912.9px;color:#f2ab26;">DevTools failed to load source map: Could not load content for <u style="color:#e8eaed">https:/          themes/AngarTheme/css/addresses.css.map</u>: HTTP error: status code 404,</div>
<div class="m" style="left:71.8px;top:1955.9px;color:#f2ab26;">net::ERR_HTTP_RESPONSE_CODE_FAILURE</div>
<svg style="left:20.5px;top:2016.5px;" width="31" height="31" viewBox="0 0 31 31"><path d="M15.5 1.5 a2.6 2.6 0 0 1 2.3 1.3 L30.3 25.5 a2.6 2.6 0 0 1 -2.3 4 H3 a2.6 2.6 0 0 1 -2.3 -4 L13.2 2.8 a2.6 2.6 0 0 1 2.3 -1.3 Z" fill="#f4bd00"/><path d="M12 8.5 H19 L18 21.5 H13 Z" fill="#fff"/><rect x="12.4" y="23.4" width="6.2" height="3.6" fill="#fff"/></svg>
<div class="m" style="left:71.8px;top:2016.9px;color:#f2ab26;">DevTools failed to load source map: Could not load content for <u style="color:#e8eaed">https:/          themes/AngarTheme/css/modules/blockcontact/blockcontact.css.map</u>: HTTP error: status code 404,</div>
<div class="m" style="left:71.8px;top:2059.9px;color:#f2ab26;">net::ERR_HTTP_RESPONSE_CODE_FAILURE</div>
<svg style="left:20.5px;top:2120.5px;" width="31" height="31" viewBox="0 0 31 31"><path d="M15.5 1.5 a2.6 2.6 0 0 1 2.3 1.3 L30.3 25.5 a2.6 2.6 0 0 1 -2.3 4 H3 a2.6 2.6 0 0 1 -2.3 -4 L13.2 2.8 a2.6 2.6 0 0 1 2.3 -1.3 Z" fill="#f4bd00"/><path d="M12 8.5 H19 L18 21.5 H13 Z" fill="#fff"/><rect x="12.4" y="23.4" width="6.2" height="3.6" fill="#fff"/></svg>
<div class="m" style="left:71.8px;top:2120.9px;color:#f2ab26;">DevTools failed to load source map: Could not load content for <u style="color:#e8eaed">https:/          themes/AngarTheme/css/order-opc.css.map</u>: HTTP error: status code 404,</div>
<div class="m" style="left:71.8px;top:2163.9px;color:#f2ab26;">net::ERR_HTTP_RESPONSE_CODE_FAILURE</div>
<div style="left:289px;top:1547px;width:201px;height:141px;background:#fff;"></div>
<div style="left:1453px;top:1797px;width:203px;height:363px;background:#fff;"></div>
<div style="left:3789px;top:1558px;width:51px;height:602px;background:#424242;"></div>
<svg style="left:3801.5px;top:1577.0px;" width="25" height="13" viewBox="0 0 25 13"><polygon points="0 13 12.5 0 25 13" fill="#919191"/></svg>
<svg style="left:3801.5px;top:2127.5px;" width="25" height="13" viewBox="0 0 25 13"><polygon points="0 0 25 0 12.5 13" fill="#fff"/></svg>
<div style="left:3791px;top:1608px;width:47px;height:115px;background:#686868;"></div>
<div style="left:725px;top:655px;width:2306px;height:703.8px;border:5.5px solid #ec1c24;border-radius:16px"></div>
<div style="left:11px;top:1679px;width:3788px;height:136px;border:5.5px solid #ec1c24;border-radius:17.5px"></div>
</div></body></html>
